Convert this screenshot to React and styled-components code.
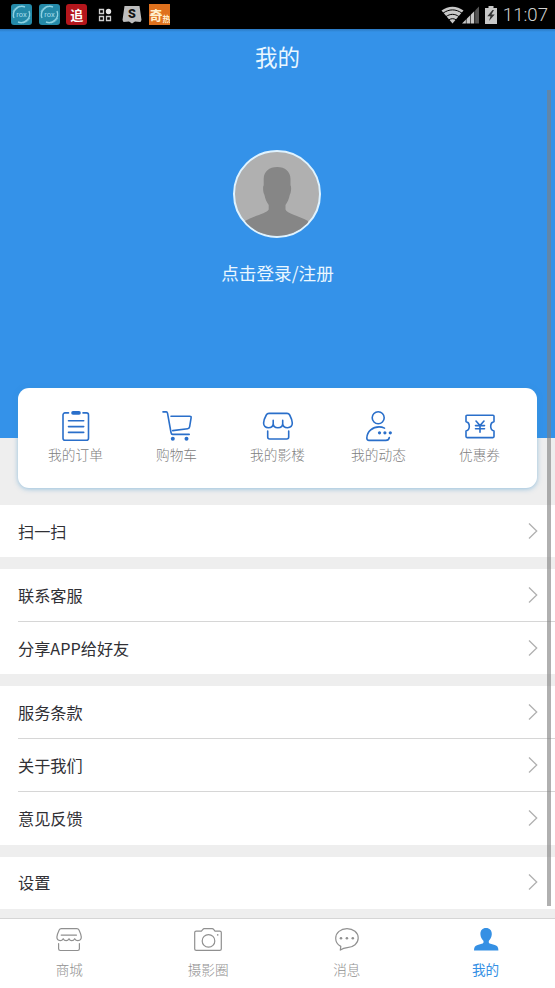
import React from 'react';
import styled, { createGlobalStyle } from 'styled-components';

const GlobalStyle = createGlobalStyle`
  * {
    box-sizing: border-box;
  }

  body {
    margin: 0;
    background: #eeeeee;
    font-family: 'Noto Sans CJK SC', sans-serif;
  }
`;

const Screen = styled.div`
  position: relative;
  display: flex;
  flex-direction: column;
  width: 555px;
  height: 988px;
  overflow: hidden;
  background: #eeeeee;
`;

/* status bar */

const StatusBar = styled.div`
  display: flex;
  flex: none;
  align-items: center;
  justify-content: space-between;
  height: 29px;
  padding: 0 7px 0 11px;
  background: #000;
`;

const Notifications = styled.div`
  display: flex;
  align-items: center;
  gap: 6.7px;
`;

const AppBadge = styled.span`
  display: flex;
  align-items: center;
  justify-content: center;
  width: 21px;
  height: 21px;
  border-radius: ${({ $square }) => ($square ? '0' : '3px')};
  background: ${({ $bg }) => $bg || 'transparent'};
  color: ${({ $color }) => $color || '#fff'};
  font-size: 13px;
  font-weight: 700;
  line-height: 1;
  overflow: hidden;

  small {
    align-self: flex-end;
    font-size: 8px;
    line-height: 12px;
  }
`;

const SystemInfo = styled.div`
  display: flex;
  align-items: center;
`;

const Clock = styled.span`
  display: flex;
  justify-content: flex-end;
  width: 51px;
  padding-top: 1px;
  color: #d2d2d2;
  font-family: Roboto, sans-serif;
  font-size: 18.6px;
  font-weight: 300;
  line-height: 28px;
  white-space: nowrap;
`;

/* profile header */

const Header = styled.header`
  display: flex;
  flex: none;
  flex-direction: column;
  align-items: center;
  height: 409px;
  background: linear-gradient(#2b79c1, #3492e9 3px);
  color: #eaf7ff;
`;

const Title = styled.h1`
  margin: 11px 0 0;
  font-size: 22.5px;
  font-weight: 400;
  line-height: 32px;
`;

const Avatar = styled.div`
  width: 88px;
  height: 88px;
  margin: 78px 1px 0 0;
  border: 2px solid #dff3ff;
  border-radius: 50%;
  background: #b0b0b0;
  overflow: hidden;

  svg {
    display: block;
    margin: -2px;
  }
`;

const LoginLink = styled.a`
  margin-top: 22px;
  font-size: 17.6px;
  line-height: 26px;
`;

/* shortcut card */

const Card = styled.section`
  display: flex;
  flex: none;
  height: 100px;
  margin: -50px 18px 17px;
  padding: 22px 7px 0;
  border-radius: 11px;
  background: #fff;
  box-shadow: 0 1px 5px rgba(60, 145, 205, 0.5);
`;

const Shortcut = styled.div`
  display: flex;
  flex: 1;
  flex-direction: column;
  align-items: center;
  color: #808080;
  font-size: 13.7px;
  font-weight: 300;
  line-height: 20px;

  svg {
    margin-bottom: 2px;
    color: #2a6fca;
  }
`;

/* menu */

const Menu = styled.main`
  flex: 1;
  min-height: 0;
  overflow: hidden;
`;

const MenuGroup = styled.div`
  margin-bottom: 12px;
  padding-left: 18px;
  background: #fff;
`;

const MenuRow = styled.div`
  display: flex;
  align-items: center;
  justify-content: space-between;
  height: 52.1px;
  padding: 0 17px 1px 0;
  color: #303035;
  font-size: 16.2px;

  & + & {
    height: 53.1px;
    border-top: 1px solid #d6d6d6;
  }
`;

const ScrollBar = styled.div`
  position: absolute;
  top: 90px;
  left: 547px;
  width: 4px;
  height: 816px;
  background: rgba(128, 128, 128, 0.62);
`;

/* bottom tabs */

const TabBar = styled.nav`
  display: flex;
  flex: none;
  height: 70px;
  padding-top: 5px;
  border-top: 1px solid #d5d5d5;
  background: #fff;
`;

const Tab = styled.div`
  display: flex;
  flex: 1;
  flex-direction: column;
  align-items: center;
  color: ${({ $active }) => ($active ? '#3590e4' : '#909090')};
  font-size: 13.6px;
  font-weight: ${({ $active }) => ($active ? 400 : 300)};
  line-height: 20px;

  svg {
    margin-bottom: 3px;
  }
`;

const Icon = ({ children, width = 1.6 }) => (
  <svg
    width="32"
    height="32"
    viewBox="0 0 32 32"
    fill="none"
    stroke="currentColor"
    strokeWidth={width}
    strokeLinecap="round"
    strokeLinejoin="round"
  >
    {children}
  </svg>
);

const OrderIcon = () => (
  <Icon>
    <path d="M8.500 2.900H5a2 2 0 0 0-2 2v23.300a2 2 0 0 0 2 2h21.500a2 2 0 0 0 2-2V4.900a2 2 0 0 0-2-2H23M8.500 10.800h15.200M8.500 16.600h15.200M8.500 22.400h15.200" />
    <path d="M13 2.900h6" strokeWidth="3.600" />
  </Icon>
);

const CartIcon = () => (
  <Icon>
    <path d="M2 1.900h3.400c.7 0 .9.500 1.100 1.200l3.500 19.400c.2 1.200.6 1.900 1.700 1.900h16.500M10 6.200h18.700c1.200 0 1.600.6 1.400 1.600l-1.500 9.100c-.2 1.100-.8 1.700-1.900 1.800L11.700 20.600" />
    <circle cx="11.800" cy="28.800" r="2" fill="currentColor" stroke="none" />
    <circle cx="25.500" cy="28.800" r="2" fill="currentColor" stroke="none" />
  </Icon>
);

const StudioIcon = () => (
  <Icon>
    <path d="M7 3.400h18c1.300 0 2.100.500 2.700 1.600 1.200 2.300 2.600 5.300 2.600 8.100 0 2.600-1.800 4.600-4.700 4.600-2.700 0-4.800-1.500-4.900-4.200V10.400v3.100c0 2.700-2 4.200-4.800 4.200s-4.700-1.500-4.700-4.200v-3.100v3.100c0 2.700-2.100 4.200-4.900 4.200-2.900 0-4.700-2-4.700-4.600 0-2.800 1.400-5.800 2.700-8.100C4.900 3.900 5.700 3.400 7 3.400z" />
    <path d="M5.700 21v6a2 2 0 0 0 2 2h17a2 2 0 0 0 2-2v-6" />
  </Icon>
);

const MomentsIcon = () => (
  <Icon>
    <circle cx="15.200" cy="7.700" r="6" />
    <path d="M21.500 18.100c-1.700-.8-3.500-1.200-5.500-1.200-6 0-12 4.200-12.200 11.200 0 1.500.8 2.300 2.200 2.300h16.800c2 0 3.200-1.100 3.500-2.900" />
    <g fill="currentColor" stroke="none">
      <circle cx="16.500" cy="22.800" r="1.600" />
      <circle cx="21.900" cy="22.800" r="1.600" />
      <circle cx="27.300" cy="22.800" r="1.600" />
    </g>
  </Icon>
);

const CouponIcon = () => (
  <Icon>
    <path d="M3 5.200h26a1 1 0 0 1 1 1v5.400c-2 .4-3.300 2.200-3.300 4.700s1.300 4.300 3.300 4.700v5.600a1 1 0 0 1-1 1H3a1 1 0 0 1-1-1V21c2-.4 3.300-2.200 3.300-4.700S4 12 2 11.600V6.200a1 1 0 0 1 1-1z" />
    <path d="M12 11l4 4.600L20 11M16 15.600v6.600M11.500 15.600h9M11.500 18.800h9" />
  </Icon>
);

const MallIcon = () => (
  <Icon width={1.2}>
    <path d="M8.300 4.700h15.600c1 0 1.700.4 2.100 1.200 1.100 2.300 2.300 4.800 2.300 7.200 0 2-1.400 3.500-3.300 3.500-1.700 0-2.700-.7-3.300-1.900-.6 1.200-1.500 1.900-2.900 1.900s-2.300-.7-2.800-1.900c-.6 1.200-1.500 1.900-2.900 1.900s-2.300-.7-2.900-1.900c-.6 1.200-1.500 1.900-3 1.900-1.900 0-3.300-1.500-3.300-3.500 0-2.400 1.200-4.900 2.300-7.200.4-.8 1.100-1.200 2.100-1.200zM8.200 11.100h15.300M5.600 19.500v5.300c0 1.100.7 1.700 1.700 1.700h17.400c1.100 0 1.700-.6 1.700-1.700v-5.300" />
  </Icon>
);

const CameraIcon = () => (
  <Icon width={1.2}>
    <path d="M4.200 7.100h5.200l1.500-1.800c.4-.5.700-.7 1.300-.7h8c.6 0 1 .2 1.400.7L23 7.100h4.800c1 0 1.500.5 1.500 1.500V25c0 1-.5 1.400-1.500 1.400H4.200c-1 0-1.500-.4-1.500-1.400V8.600c0-1 .5-1.500 1.500-1.500z" />
    <circle cx="16.500" cy="16.900" r="6.300" />
    <circle cx="25.700" cy="10.900" r=".8" fill="currentColor" stroke="none" />
  </Icon>
);

const MessageIcon = () => (
  <Icon width={1.2}>
    <path d="M9.300 26.100l.5-3.700C6.500 20.600 4.700 17.800 4.700 14.200c0-5.500 5-9.600 11.300-9.600s11.200 4.100 11.200 9.400-4.700 9.300-11 9.600c-2.700.1-4.700.9-6.900 2.500z" />
    <g fill="currentColor" stroke="none">
      <circle cx="10" cy="14.200" r="1.300" />
      <circle cx="15.900" cy="14.200" r="1.300" />
      <circle cx="21.800" cy="14.200" r="1.300" />
    </g>
  </Icon>
);

const MineIcon = () => (
  <Icon>
    <path
      d="M16 4c3.700 0 5.900 2.500 5.800 6.200-.1 3.100-1.500 5-2.900 6.500-.5 1.700 0 2.600 1.700 3.100l4.200 1.100c2.600.7 3.600 2.200 3.600 5.700H4c0-3.500 1-5 3.600-5.700l4.100-1.100c1.700-.5 2.200-1.400 1.700-3.100-1.500-1.500-2.900-3.400-3-6.500C10.300 6.500 12.400 4 16 4z"
      fill="currentColor"
      stroke="none"
    />
  </Icon>
);

const Chevron = () => (
  <svg width="10" height="18" viewBox="0 0 10 18" fill="none" stroke="#b0b0b0" strokeWidth="1.3">
    <path d="M1 1.500L8.700 9 1 16.500" />
  </svg>
);

const Swirl = () => (
  <svg width="21" height="21" viewBox="0 0 21 21" fill="none" stroke="#8ed2e3">
    <path d="M3 14A8.500 8.500 0 0 1 14 3M18 7A8.500 8.500 0 0 1 7 18" strokeWidth="1.400" />
    <path d="M2 8a9 9 0 0 1 7-6M19 14a9 9 0 0 1-7 5" strokeWidth=".7" />
    <text x="10.500" y="13" textAnchor="middle" fill="#a5dcea" stroke="none" fontFamily="Roboto, sans-serif" fontSize="7.500" fontWeight="400">rox</text>
  </svg>
);

const GridIcon = () => (
  <svg width="14" height="14" viewBox="0 0 14 14" fill="none" stroke="#d0d0d0" strokeWidth="1.300">
    <path d="M1.500 1.500h4v4h-4zM1.500 8.500h4v4h-4zM8.500 8.500h4v4h-4z" />
    <circle cx="10.500" cy="3.500" r="2.700" fill="#e4e4e4" stroke="none" />
  </svg>
);

const BookIcon = () => (
  <svg width="20" height="19" viewBox="0 0 20 19">
    <path d="M2.500 1h15l2 14-1 2-5.500-.5-3 2-3-2-5.500.5-1-2z" fill="#bdbdbd" />
    <text x="10" y="12.500" textAnchor="middle" fill="#111" fontFamily="Roboto, sans-serif" fontSize="12.500" fontWeight="900">S</text>
  </svg>
);

const WifiIcon = () => (
  <svg width="23" height="18" viewBox="0 0 23 18">
    <path d="M.5 4.500C7-.6 16-.6 22.500 4.500L11.500 17.500z" fill="#c8c8c8" />
    <path d="M2 7.200c6-4.400 13-4.400 19 0M5 10.600c4-3 9-3 13 0M8 13.800c2.300-1.500 4.700-1.500 7 0" fill="none" stroke="#000" strokeWidth="1" />
  </svg>
);

const SignalIcon = styled(({ className }) => (
  <svg className={className} width="17" height="18" viewBox="0 0 17 18">
    <path d="M0 17.500L12.500 5v12.500z" fill="#c8c8c8" />
    <path d="M13 4.500l4-4v17h-4z" fill="#555" />
    <path d="M4.300 10v8M8.500 6v12M12.700 3v15" stroke="#000" strokeWidth=".6" />
  </svg>
))`
  margin-left: -2px;
`;

const BatteryIcon = styled(({ className }) => (
  <svg className={className} width="12" height="18" viewBox="0 0 12 18">
    <path d="M3.500 0h5v2H12v16H0V2h3.500z" fill="#c8c8c8" />
    <path d="M7.500 4L2.300 10.200h3.200L4 15l5.700-6.500H6.400L9 4z" fill="#333" />
  </svg>
))`
  margin-left: 6px;
`;

const shortcuts = [
  { label: '我的订单', icon: OrderIcon },
  { label: '购物车', icon: CartIcon },
  { label: '我的影楼', icon: StudioIcon },
  { label: '我的动态', icon: MomentsIcon },
  { label: '优惠券', icon: CouponIcon },
];

const menu = [
  ['扫一扫'],
  ['联系客服', '分享APP给好友'],
  ['服务条款', '关于我们', '意见反馈'],
  ['设置'],
];

const tabs = [
  { label: '商城', icon: MallIcon },
  { label: '摄影圈', icon: CameraIcon },
  { label: '消息', icon: MessageIcon },
  { label: '我的', icon: MineIcon, active: true },
];

const App = () => {
  return (
    <Screen>
      <GlobalStyle />
      <StatusBar>
        <Notifications>
          <AppBadge $bg="#2489a8"><Swirl /></AppBadge>
          <AppBadge $bg="#2489a8"><Swirl /></AppBadge>
          <AppBadge $bg="#b5161c">追</AppBadge>
          <AppBadge><GridIcon /></AppBadge>
          <AppBadge><BookIcon /></AppBadge>
          <AppBadge $bg="#df711d" $color="#fff0cf" $square>
            奇<small>热</small>
          </AppBadge>
        </Notifications>
        <SystemInfo>
          <WifiIcon />
          <SignalIcon />
          <BatteryIcon />
          <Clock>11:07</Clock>
        </SystemInfo>
      </StatusBar>

      <Header>
        <Title>我的</Title>
        <Avatar>
          <svg width="88" height="88" viewBox="0 0 88 88">
            <path
              d="M44.200 17C52 17 57.500 21.500 57.500 29v6.500c1 .5.800 7.500-.7 9.300-.8 4.200-2.300 7.500-4.300 10.200v4.500c1.500 4 12.500 6 22.500 11.500V88H11V71.500c9-5.500 22.500-8 24.700-12V55c-2-2.700-3.500-6-4.300-10.200-1.500-1.800-1.700-8.800-.7-9.300V29c0-7.500 5.500-12 13.500-12z"
              fill="#868686"
            />
          </svg>
        </Avatar>
        <LoginLink>点击登录/注册</LoginLink>
      </Header>

      <Card>
        {shortcuts.map(({ label, icon: ShortcutIcon }) => (
          <Shortcut key={label}>
            <ShortcutIcon />
            {label}
          </Shortcut>
        ))}
      </Card>

      <Menu>
        {menu.map((rows) => (
          <MenuGroup key={rows[0]}>
            {rows.map((row) => (
              <MenuRow key={row}>
                {row}
                <Chevron />
              </MenuRow>
            ))}
          </MenuGroup>
        ))}
      </Menu>

      <TabBar>
        {tabs.map(({ label, icon: TabIcon, active }) => (
          <Tab key={label} $active={active}>
            <TabIcon />
            {label}
          </Tab>
        ))}
      </TabBar>
      <ScrollBar />
    </Screen>
  );
};

export default App;
